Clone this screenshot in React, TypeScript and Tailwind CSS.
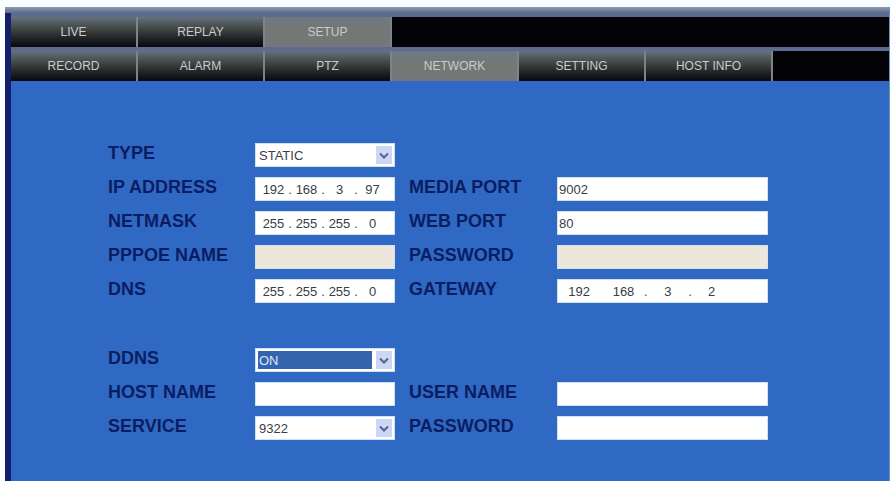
import { ReactNode } from "react";
import clsx from "clsx";

const mainTabs = ["LIVE", "REPLAY", "SETUP"];
const setupTabs = ["RECORD", "ALARM", "PTZ", "NETWORK", "SETTING", "HOST INFO"];

const TabBar = ({
  tabs,
  active,
  label,
}: {
  tabs: string[];
  active: string;
  label: string;
}) => (
  <nav
    aria-label={label}
    className="grid grid-cols-[repeat(6,127fr)_116fr] border-t-4 border-[#5d6b90] bg-[#020207]"
  >
    {tabs.map((tab) => (
      <button
        key={tab}
        type="button"
        className={clsx(
          "h-[30px] min-w-0 border-r-2 border-[#7d838b] bg-linear-to-b text-xs whitespace-nowrap text-[#c9cbcd]",
          tab === active
            ? "from-[#6f7883] via-[#747873] to-[#74777c]"
            : "from-[#66717b] via-[#373b38] to-[#07080f]",
        )}
      >
        {tab}
      </button>
    ))}
  </nav>
);

const Label = ({ htmlFor, children }: { htmlFor: string; children: ReactNode }) => (
  <label
    htmlFor={htmlFor}
    className="pb-1 text-lg leading-6 font-bold whitespace-nowrap text-[#0b1d62]"
  >
    {children}
  </label>
);

const TextField = ({
  id,
  value,
  type = "text",
  disabled,
}: {
  id: string;
  value?: string;
  type?: string;
  disabled?: boolean;
}) => (
  <input
    id={id}
    type={type}
    defaultValue={value}
    disabled={disabled}
    className="h-6 w-full min-w-0 border border-[#cfe2f5] bg-white px-px text-[13px] text-[#3c3c44] outline-none disabled:bg-[#ece7da]"
  />
);

const SelectField = ({
  id,
  options,
  selected,
}: {
  id: string;
  options: string[];
  selected?: boolean;
}) => (
  <div className="flex h-6 min-w-0 border border-[#cfe2f5] bg-white p-[2px]">
    <div className="relative flex w-full">
      <select
        id={id}
        className={clsx(
          "mr-5 w-full appearance-none px-px pt-px text-[13px] leading-4 outline-none",
          selected ? "bg-[#3564ac] text-[#dbe8f8]" : "bg-white text-[#3c3c44]",
        )}
      >
        {options.map((option) => (
          <option key={option}>{option}</option>
        ))}
      </select>
      <span className="pointer-events-none absolute inset-y-0 right-0 flex w-4 items-center justify-center bg-[#cbd7f5]">
        <svg viewBox="0 0 10 7" className="w-[10px] fill-none stroke-[#56648c] stroke-2">
          <path d="M1 1.5 5 5.5 9 1.5" />
        </svg>
      </span>
    </div>
  </div>
);

const AddressField = ({
  id,
  name,
  octets,
  dots = [".", ".", "."],
  className = "pr-[7px] pl-[3px]",
}: {
  id: string;
  name: string;
  octets: string[];
  dots?: string[];
  className?: string;
}) => (
  <div
    role="group"
    aria-label={name}
    className={clsx(
      "flex h-6 min-w-0 items-center border border-[#cfe2f5] bg-white pt-[2px] text-[13px] text-[#3c3c44]",
      className,
    )}
  >
    {octets.map((octet, i) => (
      <div key={i} className={clsx("flex min-w-0 items-center", i < 3 ? "flex-[33]" : "flex-[29]")}>
        <input
          id={i === 0 ? id : `${id}-${i}`}
          aria-label={`${name} part ${i + 1}`}
          defaultValue={octet}
          maxLength={3}
          className="w-full min-w-0 text-center outline-none"
        />
        {i < 3 && <span className="w-1 shrink-0 text-center">{dots[i]}</span>}
      </div>
    ))}
  </div>
);

const rowGrid =
  "grid auto-rows-[34px] grid-cols-[147fr_140fr_162fr_211fr] items-center";

const App = () => {
  return (
    <div className="flex min-h-screen flex-col bg-[#fafeff] pt-[7px] pr-[3px] pb-px pl-[5px] font-['Liberation_Sans',Arial,sans-serif]">
      <div className="flex flex-1 flex-col border-b border-b-[#55708f] bg-[#2f69c3]">
        <div className="h-[6px] bg-linear-to-b from-[#8a9ea5] to-[#5d6b90]" />
        <div className="flex flex-1 flex-col border-r border-l-6 border-r-[#6f8fb0] border-l-[#141f6c]">
          <TabBar tabs={mainTabs} active="SETUP" label="Main" />
          <TabBar tabs={setupTabs} active="NETWORK" label="Setup" />

          <form className="flex flex-col gap-[35px] pt-[57px] pr-[121px] pb-9 pl-[97px]">
            <div className={rowGrid}>
              <Label htmlFor="type">TYPE</Label>
              <SelectField id="type" options={["STATIC", "DHCP", "PPPOE"]} />
              <span className="col-span-2" />

              <Label htmlFor="ip">IP ADDRESS</Label>
              <AddressField id="ip" name="IP address" octets={["192", "168", "3", "97"]} />
              <div className="flex pl-[14px]">
                <Label htmlFor="media-port">MEDIA PORT</Label>
              </div>
              <TextField id="media-port" value="9002" />

              <Label htmlFor="netmask">NETMASK</Label>
              <AddressField id="netmask" name="Netmask" octets={["255", "255", "255", "0"]} />
              <div className="flex pl-[14px]">
                <Label htmlFor="web-port">WEB PORT</Label>
              </div>
              <TextField id="web-port" value="80" />

              <Label htmlFor="pppoe-name">PPPOE NAME</Label>
              <TextField id="pppoe-name" disabled />
              <div className="flex pl-[14px]">
                <Label htmlFor="pppoe-password">PASSWORD</Label>
              </div>
              <TextField id="pppoe-password" type="password" disabled />

              <Label htmlFor="dns">DNS</Label>
              <AddressField id="dns" name="DNS" octets={["255", "255", "255", "0"]} />
              <div className="flex pl-[14px]">
                <Label htmlFor="gateway">GATEWAY</Label>
              </div>
              <AddressField
                id="gateway"
                name="Gateway"
                octets={["192", "168", "3", "2"]}
                dots={["", ".", "."]}
                className="pr-9 pl-px"
              />
            </div>

            <div className={rowGrid}>
              <Label htmlFor="ddns">DDNS</Label>
              <SelectField id="ddns" options={["ON", "OFF"]} selected />
              <span className="col-span-2" />

              <Label htmlFor="host-name">HOST NAME</Label>
              <TextField id="host-name" />
              <div className="flex pl-[14px]">
                <Label htmlFor="user-name">USER NAME</Label>
              </div>
              <TextField id="user-name" />

              <Label htmlFor="service">SERVICE</Label>
              <SelectField id="service" options={["9322", "dyndns"]} />
              <div className="flex pl-[14px]">
                <Label htmlFor="ddns-password">PASSWORD</Label>
              </div>
              <TextField id="ddns-password" type="password" />
            </div>
          </form>
        </div>
      </div>
    </div>
  );
};

export default App;
